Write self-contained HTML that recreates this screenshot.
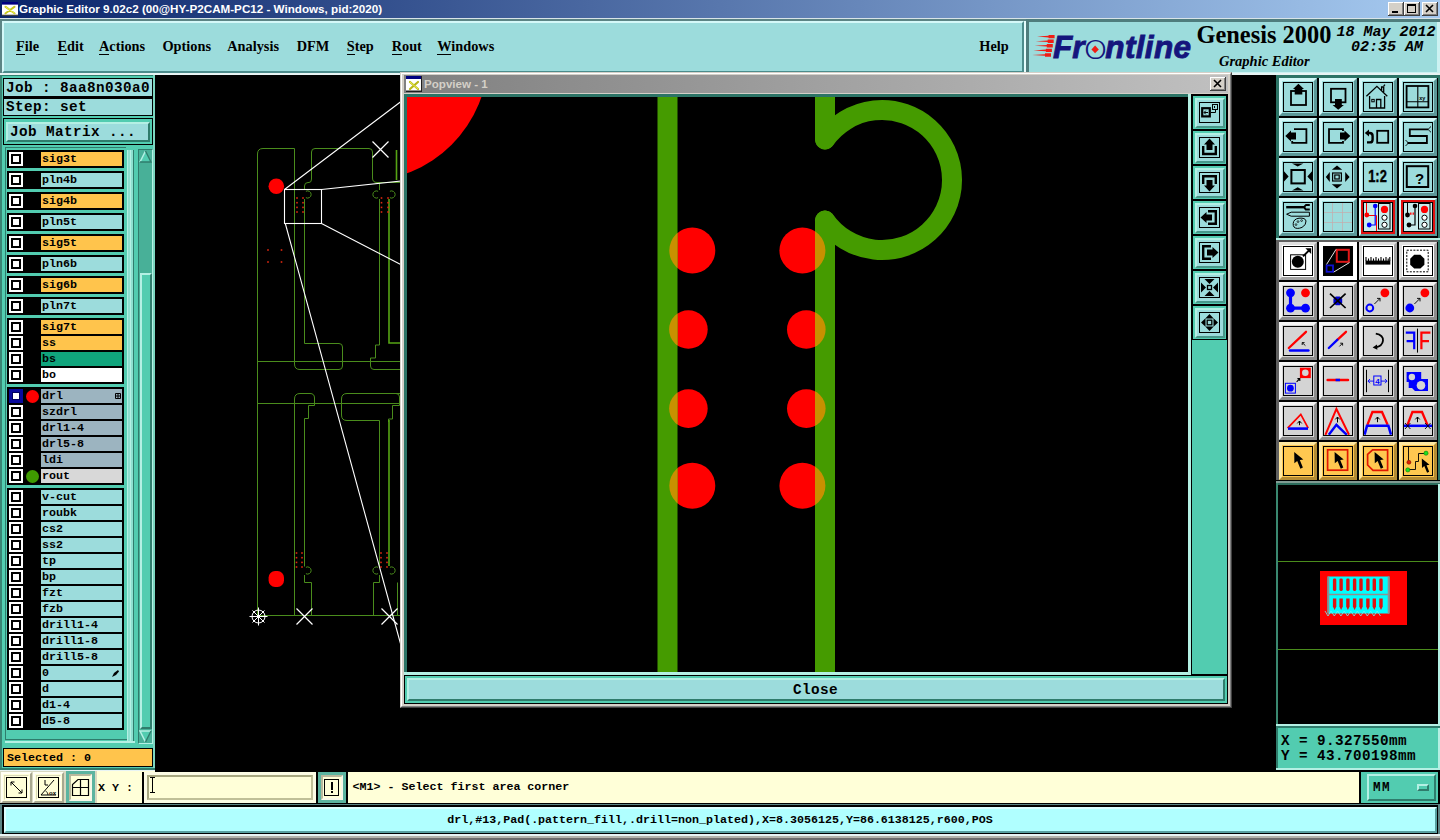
<!DOCTYPE html>
<html lang="en"><head><meta charset="utf-8"><title>Graphic Editor</title>
<style>
html,body{margin:0;padding:0}
body{width:1440px;height:840px;position:relative;overflow:hidden;background:#000;font-family:"Liberation Mono",monospace}
div,span,svg{position:absolute;display:block}
span{white-space:pre}
u{text-decoration:none;border-bottom:1px solid #000;padding-bottom:0}
</style></head>
<body>
<!-- part_frame -->
<div style="left:0px;top:0px;width:1440px;height:840px;background:#5c8484"></div>
<div style="left:0px;top:0px;width:1440px;height:18px;background:linear-gradient(90deg,#0a246a 0%,#a6caf0 100%)"></div>
<div style="left:0px;top:18px;width:1440px;height:1px;background:#d8e4e8"></div>
<svg style="left:2px;top:2px" width="16" height="14" viewBox="0 0 16 16" preserveAspectRatio="none"><rect x="0" y="0" width="16" height="16" fill="#fff"/><rect x="0" y="0" width="16" height="3" fill="#000080"/><rect x="0" y="14.5" width="16" height="1.5" fill="#404040"/><path d="M3.5 5.5L12.5 13M12.5 5.5L3.5 13" stroke="#c8c81e" stroke-width="2.2" stroke-linecap="round"/><path d="M3.5 5.5L12.5 13" stroke="#f0f050" stroke-width="1"/></svg>
<span class="ttl" style="left:19px;top:1px;font:bold 11.65px/16px 'Liberation Sans', sans-serif;color:#fff">Graphic Editor 9.02c2 (00@HY-P2CAM-PC12 - Windows, pid:2020)</span>
<svg style="left:1388px;top:2px" width="16" height="14" viewBox="0 0 16 14"><rect width="16" height="14" fill="#404040"/><rect width="15" height="13" fill="#fff"/><rect x="1" y="1" width="14" height="12" fill="#808080"/><rect x="1" y="1" width="13" height="11" fill="#d4d0c8"/><rect x="4" y="9" width="6" height="2" fill="#000"/></svg>
<svg style="left:1404px;top:2px" width="16" height="14" viewBox="0 0 16 14"><rect width="16" height="14" fill="#404040"/><rect width="15" height="13" fill="#fff"/><rect x="1" y="1" width="14" height="12" fill="#808080"/><rect x="1" y="1" width="13" height="11" fill="#d4d0c8"/><rect x="3.5" y="2.5" width="8" height="8" fill="none" stroke="#000"/><rect x="3" y="2" width="9" height="2" fill="#000"/></svg>
<svg style="left:1422px;top:2px" width="16" height="14" viewBox="0 0 16 14"><rect width="16" height="14" fill="#404040"/><rect width="15" height="13" fill="#fff"/><rect x="1" y="1" width="14" height="12" fill="#808080"/><rect x="1" y="1" width="13" height="11" fill="#d4d0c8"/><path d="M4 3L11 10M11 3L4 10" stroke="#000" stroke-width="1.6"/></svg>
<div style="left:2px;top:21px;width:1022px;height:52px;background:#9cdcdc;box-sizing:border-box;border:2px solid;border-color:#d4f8f8 #4c8c8c #4c8c8c #d4f8f8"></div>
<span class="mi" style="left:16px;top:37px;font:bold 14.3px/18px 'Liberation Serif', serif;color:#000"><u>F</u>ile</span>
<span class="mi" style="left:57.5px;top:37px;font:bold 14.3px/18px 'Liberation Serif', serif;color:#000"><u>E</u>dit</span>
<span class="mi" style="left:99px;top:37px;font:bold 14.3px/18px 'Liberation Serif', serif;color:#000"><u>A</u>ctions</span>
<span class="mi" style="left:162.5px;top:37px;font:bold 14.3px/18px 'Liberation Serif', serif;color:#000">Options</span>
<span class="mi" style="left:227.3px;top:37px;font:bold 14.3px/18px 'Liberation Serif', serif;color:#000">Analysis</span>
<span class="mi" style="left:296.7px;top:37px;font:bold 14.3px/18px 'Liberation Serif', serif;color:#000">DFM</span>
<span class="mi" style="left:346.7px;top:37px;font:bold 14.3px/18px 'Liberation Serif', serif;color:#000"><u>S</u>tep</span>
<span class="mi" style="left:391.7px;top:37px;font:bold 14.3px/18px 'Liberation Serif', serif;color:#000"><u>R</u>out</span>
<span class="mi" style="left:437.3px;top:37px;font:bold 14.3px/18px 'Liberation Serif', serif;color:#000"><u>W</u>indows</span>
<span class="mi" style="left:979.3px;top:37px;font:bold 14.3px/18px 'Liberation Serif', serif;color:#000">Help</span>
<div style="left:1024px;top:21px;width:2px;height:51px;background:#e4fcfc"></div>
<div style="left:1026px;top:19px;width:414px;height:53px;background:#4f7d7d"></div>
<div style="left:1029px;top:22px;width:411px;height:50px;background:#9cdcdc"></div>
<div style="left:1024px;top:72px;width:416px;height:3px;background:#ccf2f2"></div>
<div style="left:1437px;top:22px;width:3px;height:50px;background:#ccf2f2"></div>
<svg style="left:1030px;top:24px" width="165" height="44" viewBox="1030 24 165 44"><path d="M1037.0 36.6L1048.6 35.8V34.9H1054.6V38.3H1048.6V37.4z" fill="#f01c14"/><path d="M1035.8 41.2L1047.7 40.4V39.5H1053.7V42.9H1047.7V42.0z" fill="#f01c14"/><path d="M1034.6 45.8L1046.8 45.0V44.1H1052.8V47.5H1046.8V46.6z" fill="#f01c14"/><path d="M1033.4 50.4L1045.9 49.6V48.7H1051.9V52.1H1045.9V51.2z" fill="#f01c14"/><path d="M1032.2 55.0L1045.0 54.2V53.3H1051.0V56.7H1045.0V55.8z" fill="#f01c14"/><path d="M1095.1 45.6l3.7 3.8l-3.7 3.8l-3.7 -3.8z" fill="#f01c14"/></svg>
<span style="left:1053px;top:28px;font:italic bold 31.5px/36px 'Liberation Sans', sans-serif;color:#15157d;-webkit-text-stroke:0.9px #15157d">Fr<span style="position:relative;display:inline-block;top:0.6px;width:20.8px;text-align:center;font:normal 200 34px/36px 'DejaVu Sans', sans-serif;-webkit-text-stroke:0;transform:scaleX(1.25)">o</span><span style="position:static;display:inline;letter-spacing:0.35px">ntline</span></span>
<span style="left:1196.5px;top:21px;font:bold 24.4px/28px 'Liberation Serif', serif;color:#000">Genesis 2000</span>
<span style="left:1219px;top:53px;font:italic bold 14.5px/16px 'Liberation Serif', serif;color:#000">Graphic Editor</span>
<span style="left:1336.5px;top:24px;font:italic bold 15px/17px 'Liberation Mono', monospace;color:#000">18 May 2012</span>
<span style="left:1351px;top:39px;font:italic bold 15px/17px 'Liberation Mono', monospace;color:#000">02:35 AM</span>
<!-- part_left -->
<div style="left:0px;top:75px;width:155px;height:695px;background:#52ccb0"></div>
<div style="left:0px;top:75px;width:2px;height:695px;background:#3a8474"></div>
<div style="left:153px;top:75px;width:2px;height:695px;background:#7cd6c0"></div>
<div style="left:2px;top:75px;width:151px;height:1px;background:#2f7c6c"></div>
<div style="left:3px;top:78px;width:150px;height:19px;background:#9cdcdc;box-sizing:border-box;border:1px solid #000"></div>
<div style="left:3px;top:97px;width:150px;height:19px;background:#9cdcdc;box-sizing:border-box;border:1px solid #000;border-top:2px solid #000"></div>
<span style="left:6px;top:80px;font:bold 14.3px/17px 'Liberation Mono', monospace;letter-spacing:0.42px;color:#000">Job : 8aa8n030a0</span>
<span style="left:6px;top:99px;font:bold 14.3px/17px 'Liberation Mono', monospace;letter-spacing:0.42px;color:#000">Step: set</span>
<div style="left:3px;top:118px;width:150px;height:27px;background:#52ccb0;box-sizing:border-box;border:1px solid #000"></div>
<div style="left:6px;top:122px;width:144px;height:20px;background:#9cdcdc;box-sizing:border-box;border:2px solid;border-color:#b4f0e4 #2f7c6c #2f7c6c #b4f0e4"></div>
<span style="left:10px;top:124px;font:bold 14.3px/17px 'Liberation Mono', monospace;letter-spacing:0.42px;color:#000">Job Matrix ...</span>
<div style="left:7px;top:150px;width:117px;height:18px;background:#000"></div>
<div style="left:9px;top:152px;width:14px;height:14px;background:#fff"><div style="left:2px;top:2px;width:10px;height:10px;background:#fff;box-sizing:border-box;border:2px solid #000"></div>
</div>
<div style="left:41px;top:152px;width:81px;height:14px;background:#ffc44c"></div>
<span style="left:42px;top:152px;font:bold 11.67px/14px 'Liberation Mono', monospace;color:#000">sig3t</span>
<div style="left:7px;top:171px;width:117px;height:18px;background:#000"></div>
<div style="left:9px;top:173px;width:14px;height:14px;background:#fff"><div style="left:2px;top:2px;width:10px;height:10px;background:#fff;box-sizing:border-box;border:2px solid #000"></div>
</div>
<div style="left:41px;top:173px;width:81px;height:14px;background:#9cdcdc"></div>
<span style="left:42px;top:173px;font:bold 11.67px/14px 'Liberation Mono', monospace;color:#000">pln4b</span>
<div style="left:7px;top:192px;width:117px;height:18px;background:#000"></div>
<div style="left:9px;top:194px;width:14px;height:14px;background:#fff"><div style="left:2px;top:2px;width:10px;height:10px;background:#fff;box-sizing:border-box;border:2px solid #000"></div>
</div>
<div style="left:41px;top:194px;width:81px;height:14px;background:#ffc44c"></div>
<span style="left:42px;top:194px;font:bold 11.67px/14px 'Liberation Mono', monospace;color:#000">sig4b</span>
<div style="left:7px;top:213px;width:117px;height:18px;background:#000"></div>
<div style="left:9px;top:215px;width:14px;height:14px;background:#fff"><div style="left:2px;top:2px;width:10px;height:10px;background:#fff;box-sizing:border-box;border:2px solid #000"></div>
</div>
<div style="left:41px;top:215px;width:81px;height:14px;background:#9cdcdc"></div>
<span style="left:42px;top:215px;font:bold 11.67px/14px 'Liberation Mono', monospace;color:#000">pln5t</span>
<div style="left:7px;top:234px;width:117px;height:18px;background:#000"></div>
<div style="left:9px;top:236px;width:14px;height:14px;background:#fff"><div style="left:2px;top:2px;width:10px;height:10px;background:#fff;box-sizing:border-box;border:2px solid #000"></div>
</div>
<div style="left:41px;top:236px;width:81px;height:14px;background:#ffc44c"></div>
<span style="left:42px;top:236px;font:bold 11.67px/14px 'Liberation Mono', monospace;color:#000">sig5t</span>
<div style="left:7px;top:255px;width:117px;height:18px;background:#000"></div>
<div style="left:9px;top:257px;width:14px;height:14px;background:#fff"><div style="left:2px;top:2px;width:10px;height:10px;background:#fff;box-sizing:border-box;border:2px solid #000"></div>
</div>
<div style="left:41px;top:257px;width:81px;height:14px;background:#9cdcdc"></div>
<span style="left:42px;top:257px;font:bold 11.67px/14px 'Liberation Mono', monospace;color:#000">pln6b</span>
<div style="left:7px;top:276px;width:117px;height:18px;background:#000"></div>
<div style="left:9px;top:278px;width:14px;height:14px;background:#fff"><div style="left:2px;top:2px;width:10px;height:10px;background:#fff;box-sizing:border-box;border:2px solid #000"></div>
</div>
<div style="left:41px;top:278px;width:81px;height:14px;background:#ffc44c"></div>
<span style="left:42px;top:278px;font:bold 11.67px/14px 'Liberation Mono', monospace;color:#000">sig6b</span>
<div style="left:7px;top:297px;width:117px;height:18px;background:#000"></div>
<div style="left:9px;top:299px;width:14px;height:14px;background:#fff"><div style="left:2px;top:2px;width:10px;height:10px;background:#fff;box-sizing:border-box;border:2px solid #000"></div>
</div>
<div style="left:41px;top:299px;width:81px;height:14px;background:#9cdcdc"></div>
<span style="left:42px;top:299px;font:bold 11.67px/14px 'Liberation Mono', monospace;color:#000">pln7t</span>
<div style="left:7px;top:318px;width:117px;height:66px;background:#000"></div>
<div style="left:9px;top:320px;width:14px;height:14px;background:#fff"><div style="left:2px;top:2px;width:10px;height:10px;background:#fff;box-sizing:border-box;border:2px solid #000"></div>
</div>
<div style="left:41px;top:320px;width:81px;height:14px;background:#ffc44c"></div>
<span style="left:42px;top:320px;font:bold 11.67px/14px 'Liberation Mono', monospace;color:#000">sig7t</span>
<div style="left:9px;top:336px;width:14px;height:14px;background:#fff"><div style="left:2px;top:2px;width:10px;height:10px;background:#fff;box-sizing:border-box;border:2px solid #000"></div>
</div>
<div style="left:41px;top:336px;width:81px;height:14px;background:#ffc44c"></div>
<span style="left:42px;top:336px;font:bold 11.67px/14px 'Liberation Mono', monospace;color:#000">ss</span>
<div style="left:9px;top:352px;width:14px;height:14px;background:#fff"><div style="left:2px;top:2px;width:10px;height:10px;background:#fff;box-sizing:border-box;border:2px solid #000"></div>
</div>
<div style="left:41px;top:352px;width:81px;height:14px;background:#10a47c"></div>
<span style="left:42px;top:352px;font:bold 11.67px/14px 'Liberation Mono', monospace;color:#000">bs</span>
<div style="left:9px;top:368px;width:14px;height:14px;background:#fff"><div style="left:2px;top:2px;width:10px;height:10px;background:#fff;box-sizing:border-box;border:2px solid #000"></div>
</div>
<div style="left:41px;top:368px;width:81px;height:14px;background:#ffffff"></div>
<span style="left:42px;top:368px;font:bold 11.67px/14px 'Liberation Mono', monospace;color:#000">bo</span>
<div style="left:7px;top:387px;width:117px;height:98px;background:#000"></div>
<div style="left:9px;top:389px;width:14px;height:14px;background:#0a0a9c"><div style="left:3px;top:3px;width:8px;height:8px;background:#fff;box-sizing:border-box;border:1px solid #000060"></div>
</div>
<div style="left:41px;top:389px;width:81px;height:14px;background:#9cb4c0"></div>
<span style="left:42px;top:389px;font:bold 11.67px/14px 'Liberation Mono', monospace;color:#000">drl</span>
<div style="left:26px;top:390px;width:13px;height:13px;background:#ff0000;border-radius:50%"></div>
<svg style="left:115px;top:393px" width="6" height="6" viewBox="0 0 6 6"><path d="M0.5 0.5h5v5h-5zM3 0.5v5M0.5 3h5" fill="none" stroke="#000" stroke-width="1"/></svg>
<div style="left:9px;top:405px;width:14px;height:14px;background:#fff"><div style="left:2px;top:2px;width:10px;height:10px;background:#fff;box-sizing:border-box;border:2px solid #000"></div>
</div>
<div style="left:41px;top:405px;width:81px;height:14px;background:#9cb4c0"></div>
<span style="left:42px;top:405px;font:bold 11.67px/14px 'Liberation Mono', monospace;color:#000">szdrl</span>
<div style="left:9px;top:421px;width:14px;height:14px;background:#fff"><div style="left:2px;top:2px;width:10px;height:10px;background:#fff;box-sizing:border-box;border:2px solid #000"></div>
</div>
<div style="left:41px;top:421px;width:81px;height:14px;background:#9cb4c0"></div>
<span style="left:42px;top:421px;font:bold 11.67px/14px 'Liberation Mono', monospace;color:#000">drl1-4</span>
<div style="left:9px;top:437px;width:14px;height:14px;background:#fff"><div style="left:2px;top:2px;width:10px;height:10px;background:#fff;box-sizing:border-box;border:2px solid #000"></div>
</div>
<div style="left:41px;top:437px;width:81px;height:14px;background:#9cb4c0"></div>
<span style="left:42px;top:437px;font:bold 11.67px/14px 'Liberation Mono', monospace;color:#000">drl5-8</span>
<div style="left:9px;top:453px;width:14px;height:14px;background:#fff"><div style="left:2px;top:2px;width:10px;height:10px;background:#fff;box-sizing:border-box;border:2px solid #000"></div>
</div>
<div style="left:41px;top:453px;width:81px;height:14px;background:#9cb4c0"></div>
<span style="left:42px;top:453px;font:bold 11.67px/14px 'Liberation Mono', monospace;color:#000">ldi</span>
<div style="left:9px;top:469px;width:14px;height:14px;background:#fff"><div style="left:2px;top:2px;width:10px;height:10px;background:#fff;box-sizing:border-box;border:2px solid #000"></div>
</div>
<div style="left:41px;top:469px;width:81px;height:14px;background:#d8d8d8"></div>
<span style="left:42px;top:469px;font:bold 11.67px/14px 'Liberation Mono', monospace;color:#000">rout</span>
<div style="left:26px;top:470px;width:13px;height:13px;background:#3f9a00;border-radius:50%"></div>
<div style="left:7px;top:488px;width:117px;height:242px;background:#000"></div>
<div style="left:9px;top:490px;width:14px;height:14px;background:#fff"><div style="left:2px;top:2px;width:10px;height:10px;background:#fff;box-sizing:border-box;border:2px solid #000"></div>
</div>
<div style="left:41px;top:490px;width:81px;height:14px;background:#9cdcdc"></div>
<span style="left:42px;top:490px;font:bold 11.67px/14px 'Liberation Mono', monospace;color:#000">v-cut</span>
<div style="left:9px;top:506px;width:14px;height:14px;background:#fff"><div style="left:2px;top:2px;width:10px;height:10px;background:#fff;box-sizing:border-box;border:2px solid #000"></div>
</div>
<div style="left:41px;top:506px;width:81px;height:14px;background:#9cdcdc"></div>
<span style="left:42px;top:506px;font:bold 11.67px/14px 'Liberation Mono', monospace;color:#000">roubk</span>
<div style="left:9px;top:522px;width:14px;height:14px;background:#fff"><div style="left:2px;top:2px;width:10px;height:10px;background:#fff;box-sizing:border-box;border:2px solid #000"></div>
</div>
<div style="left:41px;top:522px;width:81px;height:14px;background:#9cdcdc"></div>
<span style="left:42px;top:522px;font:bold 11.67px/14px 'Liberation Mono', monospace;color:#000">cs2</span>
<div style="left:9px;top:538px;width:14px;height:14px;background:#fff"><div style="left:2px;top:2px;width:10px;height:10px;background:#fff;box-sizing:border-box;border:2px solid #000"></div>
</div>
<div style="left:41px;top:538px;width:81px;height:14px;background:#9cdcdc"></div>
<span style="left:42px;top:538px;font:bold 11.67px/14px 'Liberation Mono', monospace;color:#000">ss2</span>
<div style="left:9px;top:554px;width:14px;height:14px;background:#fff"><div style="left:2px;top:2px;width:10px;height:10px;background:#fff;box-sizing:border-box;border:2px solid #000"></div>
</div>
<div style="left:41px;top:554px;width:81px;height:14px;background:#9cdcdc"></div>
<span style="left:42px;top:554px;font:bold 11.67px/14px 'Liberation Mono', monospace;color:#000">tp</span>
<div style="left:9px;top:570px;width:14px;height:14px;background:#fff"><div style="left:2px;top:2px;width:10px;height:10px;background:#fff;box-sizing:border-box;border:2px solid #000"></div>
</div>
<div style="left:41px;top:570px;width:81px;height:14px;background:#9cdcdc"></div>
<span style="left:42px;top:570px;font:bold 11.67px/14px 'Liberation Mono', monospace;color:#000">bp</span>
<div style="left:9px;top:586px;width:14px;height:14px;background:#fff"><div style="left:2px;top:2px;width:10px;height:10px;background:#fff;box-sizing:border-box;border:2px solid #000"></div>
</div>
<div style="left:41px;top:586px;width:81px;height:14px;background:#9cdcdc"></div>
<span style="left:42px;top:586px;font:bold 11.67px/14px 'Liberation Mono', monospace;color:#000">fzt</span>
<div style="left:9px;top:602px;width:14px;height:14px;background:#fff"><div style="left:2px;top:2px;width:10px;height:10px;background:#fff;box-sizing:border-box;border:2px solid #000"></div>
</div>
<div style="left:41px;top:602px;width:81px;height:14px;background:#9cdcdc"></div>
<span style="left:42px;top:602px;font:bold 11.67px/14px 'Liberation Mono', monospace;color:#000">fzb</span>
<div style="left:9px;top:618px;width:14px;height:14px;background:#fff"><div style="left:2px;top:2px;width:10px;height:10px;background:#fff;box-sizing:border-box;border:2px solid #000"></div>
</div>
<div style="left:41px;top:618px;width:81px;height:14px;background:#9cdcdc"></div>
<span style="left:42px;top:618px;font:bold 11.67px/14px 'Liberation Mono', monospace;color:#000">drill1-4</span>
<div style="left:9px;top:634px;width:14px;height:14px;background:#fff"><div style="left:2px;top:2px;width:10px;height:10px;background:#fff;box-sizing:border-box;border:2px solid #000"></div>
</div>
<div style="left:41px;top:634px;width:81px;height:14px;background:#9cdcdc"></div>
<span style="left:42px;top:634px;font:bold 11.67px/14px 'Liberation Mono', monospace;color:#000">drill1-8</span>
<div style="left:9px;top:650px;width:14px;height:14px;background:#fff"><div style="left:2px;top:2px;width:10px;height:10px;background:#fff;box-sizing:border-box;border:2px solid #000"></div>
</div>
<div style="left:41px;top:650px;width:81px;height:14px;background:#9cdcdc"></div>
<span style="left:42px;top:650px;font:bold 11.67px/14px 'Liberation Mono', monospace;color:#000">drill5-8</span>
<div style="left:9px;top:666px;width:14px;height:14px;background:#fff"><div style="left:2px;top:2px;width:10px;height:10px;background:#fff;box-sizing:border-box;border:2px solid #000"></div>
</div>
<div style="left:41px;top:666px;width:81px;height:14px;background:#9cdcdc"></div>
<span style="left:42px;top:666px;font:bold 11.67px/14px 'Liberation Mono', monospace;color:#000">0</span>
<svg style="left:111px;top:669px" width="9" height="9" viewBox="0 0 9 9"><path d="M1 8L3 4L7 1L8 2.5L5 6z" fill="#000"/></svg>
<div style="left:9px;top:682px;width:14px;height:14px;background:#fff"><div style="left:2px;top:2px;width:10px;height:10px;background:#fff;box-sizing:border-box;border:2px solid #000"></div>
</div>
<div style="left:41px;top:682px;width:81px;height:14px;background:#9cdcdc"></div>
<span style="left:42px;top:682px;font:bold 11.67px/14px 'Liberation Mono', monospace;color:#000">d</span>
<div style="left:9px;top:698px;width:14px;height:14px;background:#fff"><div style="left:2px;top:2px;width:10px;height:10px;background:#fff;box-sizing:border-box;border:2px solid #000"></div>
</div>
<div style="left:41px;top:698px;width:81px;height:14px;background:#9cdcdc"></div>
<span style="left:42px;top:698px;font:bold 11.67px/14px 'Liberation Mono', monospace;color:#000">d1-4</span>
<div style="left:9px;top:714px;width:14px;height:14px;background:#fff"><div style="left:2px;top:2px;width:10px;height:10px;background:#fff;box-sizing:border-box;border:2px solid #000"></div>
</div>
<div style="left:41px;top:714px;width:81px;height:14px;background:#9cdcdc"></div>
<span style="left:42px;top:714px;font:bold 11.67px/14px 'Liberation Mono', monospace;color:#000">d5-8</span>
<div style="left:127px;top:150px;width:7px;height:591px;background:linear-gradient(90deg,#b4f0e4 0 1px,#8ee0d0 1px 3px,#b4f0e4 3px 4px,#8ee0d0 4px 6px,#2f7c6c 6px 7px)"></div>
<div style="left:5px;top:147px;width:121px;height:1px;background:#2f7c6c"></div>
<div style="left:5px;top:147px;width:1px;height:593px;background:#2f7c6c"></div>
<div style="left:5px;top:739px;width:122px;height:1px;background:#2f7c6c"></div>
<div style="left:5px;top:741px;width:130px;height:2px;background:#b4f0e4"></div>
<div style="left:138px;top:149px;width:15px;height:595px;background:#48b098;box-sizing:border-box;border:1px solid;border-color:#2f7c6c #b4f0e4 #b4f0e4 #2f7c6c"></div>
<svg style="left:139px;top:150px" width="13" height="14" viewBox="0 0 13 14"><path d="M6.5 1L12 12H1z" fill="#52ccb0"/><path d="M6.5 1L1 12" stroke="#b4f0e4" stroke-width="1.6" fill="none"/><path d="M6.5 1L12 12H1" stroke="#2f7c6c" stroke-width="1.4" fill="none"/></svg>
<svg style="left:139px;top:729px" width="13" height="14" viewBox="0 0 13 14"><path d="M6.5 13L12 2H1z" fill="#52ccb0"/><path d="M12 2H1L6.5 13" stroke="#b4f0e4" stroke-width="1.6" fill="none"/><path d="M6.5 13L12 2" stroke="#2f7c6c" stroke-width="1.4" fill="none"/></svg>
<div style="left:140px;top:273px;width:12px;height:456px;background:#52ccb0;box-sizing:border-box;border:2px solid;border-color:#b4f0e4 #2f7c6c #2f7c6c #b4f0e4"></div>
<div style="left:3px;top:748px;width:150px;height:19px;background:#ffc44c;box-sizing:border-box;border:1px solid #000"></div>
<span style="left:7px;top:751px;font:bold 11.67px/14px 'Liberation Mono', monospace;color:#000">Selected : 0</span>
<div style="left:0px;top:768px;width:155px;height:2px;background:#2f7c6c"></div>
<!-- part_canvas -->
<div style="left:0px;top:73px;width:1440px;height:2px;background:#e8f4f4"></div>
<div style="left:155px;top:75px;width:1285px;height:697px;background:#000"></div>
<svg style="left:155px;top:75px" width="1122" height="695" viewBox="155 75 1122 695"><g fill="none" stroke="#4a8c1c" stroke-width="1"><path d="M257.5 615.5V154Q257.5 148.5 263 148.5H294.5V364Q294.5 369.5 300 369.5H339Q342.5 369.5 342.5 366V347Q342.5 343.5 339 343.5H304.5V199"/><path d="M257.5 361.5H400M257.5 403.5H400M257.5 615.5H400"/><path d="M304.5 190V186Q304.5 182.5 308 182.5H309Q311.5 182.5 311.5 179V152Q311.5 148.5 315 148.5H369Q372.5 148.5 372.5 152V178Q372.5 182.5 377 182.5H400"/><path d="M379.5 199V345H375.5V358H370.5V366Q370.5 369.5 374 369.5H400"/><path d="M379.5 182.5V190"/><path d="M294.5 615.5V399Q294.5 393.5 300 393.5H310Q314.5 393.5 314.5 398V405.5H308.5V418.5H304.5V566.5"/><path d="M304.5 575V582.5H311.5V615.5"/><path d="M400 393.5H347Q341.5 393.5 341.5 399V415Q341.5 420.5 347 420.5H379.5V566.5"/><path d="M379.5 575V582.5H373.5V615.5"/><path d="M397.5 582.5V615.5M396 393.5Q399.5 393.5 399.5 397V405.5H392.5V419H388.5V422"/><path d="M305.9 191.3A3.6 3.6 0 1 1 305.9 197.7" /><path d="M378.1 191.3A3.6 3.6 0 1 0 378.1 197.7" /><path d="M389.9 191.3A3.6 3.6 0 1 1 389.9 197.7" /><path d="M305.9 567.3A3.6 3.6 0 1 1 305.9 573.7" /><path d="M378.1 567.3A3.6 3.6 0 1 0 378.1 573.7" /><path d="M389.9 567.3A3.6 3.6 0 1 1 389.9 573.7" /></g><g fill="none" stroke="#56a414" stroke-width="1.6"><path d="M396.5 150V180M389 199V343H400M389 420V566"/></g><rect x="296.2" y="197.2" width="1.6" height="1.6" fill="#e02810"/><rect x="296.2" y="201.9" width="1.6" height="1.6" fill="#e02810"/><rect x="296.2" y="206.6" width="1.6" height="1.6" fill="#e02810"/><rect x="296.2" y="211.2" width="1.6" height="1.6" fill="#e02810"/><rect x="302.2" y="197.2" width="1.6" height="1.6" fill="#e02810"/><rect x="302.2" y="201.9" width="1.6" height="1.6" fill="#e02810"/><rect x="302.2" y="206.6" width="1.6" height="1.6" fill="#e02810"/><rect x="302.2" y="211.2" width="1.6" height="1.6" fill="#e02810"/><rect x="380.7" y="197.2" width="1.6" height="1.6" fill="#e02810"/><rect x="380.7" y="201.9" width="1.6" height="1.6" fill="#e02810"/><rect x="380.7" y="206.6" width="1.6" height="1.6" fill="#e02810"/><rect x="380.7" y="211.2" width="1.6" height="1.6" fill="#e02810"/><rect x="387.2" y="197.2" width="1.6" height="1.6" fill="#e02810"/><rect x="387.2" y="201.9" width="1.6" height="1.6" fill="#e02810"/><rect x="387.2" y="206.6" width="1.6" height="1.6" fill="#e02810"/><rect x="387.2" y="211.2" width="1.6" height="1.6" fill="#e02810"/><rect x="267.2" y="249.2" width="1.6" height="1.6" fill="#e02810"/><rect x="267.2" y="261.2" width="1.6" height="1.6" fill="#e02810"/><rect x="280.7" y="249.2" width="1.6" height="1.6" fill="#e02810"/><rect x="280.7" y="261.2" width="1.6" height="1.6" fill="#e02810"/><rect x="295.7" y="552.2" width="1.6" height="1.6" fill="#e02810"/><rect x="295.7" y="556.9" width="1.6" height="1.6" fill="#e02810"/><rect x="295.7" y="561.6" width="1.6" height="1.6" fill="#e02810"/><rect x="295.7" y="566.2" width="1.6" height="1.6" fill="#e02810"/><rect x="301.2" y="552.2" width="1.6" height="1.6" fill="#e02810"/><rect x="301.2" y="556.9" width="1.6" height="1.6" fill="#e02810"/><rect x="301.2" y="561.6" width="1.6" height="1.6" fill="#e02810"/><rect x="301.2" y="566.2" width="1.6" height="1.6" fill="#e02810"/><rect x="380.2" y="552.2" width="1.6" height="1.6" fill="#e02810"/><rect x="380.2" y="556.9" width="1.6" height="1.6" fill="#e02810"/><rect x="380.2" y="561.6" width="1.6" height="1.6" fill="#e02810"/><rect x="380.2" y="566.2" width="1.6" height="1.6" fill="#e02810"/><rect x="386.2" y="552.2" width="1.6" height="1.6" fill="#e02810"/><rect x="386.2" y="556.9" width="1.6" height="1.6" fill="#e02810"/><rect x="386.2" y="561.6" width="1.6" height="1.6" fill="#e02810"/><rect x="386.2" y="566.2" width="1.6" height="1.6" fill="#e02810"/><circle cx="276.3" cy="186.2" r="7.8" fill="#ff0000"/><rect x="268.6" y="571" width="15.4" height="16" rx="6.5" fill="#ff0000"/><g fill="none" stroke="#fff" stroke-width="1.1"><rect x="284.5" y="189.5" width="37" height="34"/><path d="M284.5 189.5L407 97M321.5 189.5L1188 97M321.5 223.5L1188 672M285.3 223.5L408.3 672"/></g><path d="M372.5 141.5L388.5 157.5M388.5 141.5L372.5 157.5" stroke="#fff" stroke-width="1.2" fill="none"/><path d="M296.5 608.5L312.5 624.5M312.5 608.5L296.5 624.5" stroke="#fff" stroke-width="1.2" fill="none"/><path d="M381.5 608.5L397.5 624.5M397.5 608.5L381.5 624.5" stroke="#fff" stroke-width="1.2" fill="none"/><g fill="none" stroke="#fff" stroke-width="1"><circle cx="258.5" cy="616.5" r="6.5"/><path d="M249.5 616.5H267.5M258.5 607.5V625.5M252.5 610.5L264.5 622.5M264.5 610.5L252.5 622.5"/></g></svg>
<!-- part_popview -->
<div style="left:400px;top:72px;width:832px;height:636px;background:#d4d0c8;box-sizing:border-box;border:1px solid;border-color:#d4d0c8 #404040 #404040 #d4d0c8"></div>
<div style="left:401px;top:73px;width:830px;height:634px;box-sizing:border-box;border:1px solid;border-color:#fff #808080 #808080 #fff"></div>
<div style="left:404px;top:75px;width:824px;height:18px;background:linear-gradient(90deg,#808080,#c0c0c0)"></div>
<svg style="left:406px;top:76px" width="16" height="16" viewBox="0 0 16 16"><rect x="0" y="0" width="16" height="16" fill="#fff"/><rect x="0" y="0" width="16" height="3" fill="#000080"/><rect x="0" y="14.5" width="16" height="1.5" fill="#202020"/><rect x="15" y="0" width="1" height="16" fill="#202020"/><path d="M4 6L12 13M12 6L4 13" stroke="#b8b818" stroke-width="2.2" stroke-linecap="round"/><path d="M4 6L12 13" stroke="#f0f050" stroke-width="1"/></svg>
<span style="left:424px;top:76px;font:bold 11.6px/16px 'Liberation Sans', sans-serif;color:#d4d0c8">Popview - 1</span>
<svg style="left:1210px;top:77px" width="16" height="14" viewBox="0 0 16 14"><rect width="16" height="14" fill="#404040"/><rect width="15" height="13" fill="#fff"/><rect x="1" y="1" width="14" height="12" fill="#808080"/><rect x="1" y="1" width="13" height="11" fill="#d4d0c8"/><path d="M4 3L11 10M11 3L4 10" stroke="#000" stroke-width="1.6"/></svg>
<div style="left:404px;top:94px;width:824px;height:610px;background:#000"></div>
<div style="left:404px;top:94px;width:787px;height:581px;background:#b4f0e4"></div>
<div style="left:404px;top:94px;width:784px;height:3px;background:#2c7466"></div>
<div style="left:404px;top:94px;width:3px;height:578px;background:#2c7466"></div>
<div style="left:407px;top:97px;width:781px;height:575px;background:#000"></div>
<svg style="left:407px;top:97px" width="781" height="575" viewBox="407 97 781 575"><circle cx="363.4" cy="56.4" r="124.8" fill="#ff0000"/><circle cx="692.3" cy="250.5" r="23" fill="#ff0000"/><circle cx="802.4" cy="250.5" r="23" fill="#ff0000"/><circle cx="688.4" cy="329.5" r="19.3" fill="#ff0000"/><circle cx="806.3" cy="329.5" r="19.3" fill="#ff0000"/><circle cx="688.4" cy="408.6" r="19.3" fill="#ff0000"/><circle cx="806.3" cy="408.6" r="19.3" fill="#ff0000"/><circle cx="692.3" cy="485.8" r="23" fill="#ff0000"/><circle cx="802.4" cy="485.8" r="23" fill="#ff0000"/><g fill="none" stroke="#459b00" stroke-width="20" stroke-linecap="round"><path d="M667.5 80V690"/><path d="M825 80V139.4"/><path d="M825 139.4A70 70 0 1 1 825 220.6"/><path d="M825 220.6V690"/></g><clipPath id="cl"><rect x="657.5" y="97" width="20" height="575"/><rect x="815" y="97" width="20" height="575"/></clipPath><g clip-path="url(#cl)"><circle cx="692.3" cy="250.5" r="23" fill="#c89000"/><circle cx="802.4" cy="250.5" r="23" fill="#c89000"/><circle cx="688.4" cy="329.5" r="19.3" fill="#c89000"/><circle cx="806.3" cy="329.5" r="19.3" fill="#c89000"/><circle cx="688.4" cy="408.6" r="19.3" fill="#c89000"/><circle cx="806.3" cy="408.6" r="19.3" fill="#c89000"/><circle cx="692.3" cy="485.8" r="23" fill="#c89000"/><circle cx="802.4" cy="485.8" r="23" fill="#c89000"/></g></svg>
<div style="left:1192px;top:96px;width:35px;height:578px;background:#52ccb0"></div>
<div style="left:1192px;top:95px;width:35px;height:35px;background:#000"></div>
<div style="left:1193px;top:96px;width:33px;height:33px;background:#52ccb0"></div>
<div style="left:1194.5px;top:97.5px;width:30px;height:30px;background:#9cdcdc;box-sizing:border-box;border:2.5px solid;border-color:#b4f0e4 #48988a #48988a #b4f0e4"></div>
<div style="left:1199px;top:102px;width:21px;height:21px;box-sizing:border-box;border:1px solid #000"></div>
<svg style="left:1199px;top:102px" width="21" height="21" viewBox="0 0 21 21"><rect x="3.2" y="6.2" width="7.6" height="8.2" fill="none" stroke="#000" stroke-width="2.2"/><path d="M9 10.5H5.2M6.8 8.7L5 10.5L6.8 12.3" stroke="#000" stroke-width="1" fill="none"/><rect x="13.5" y="2.5" width="5" height="5" fill="none" stroke="#000"/><path d="M16.5 7.5V10.5H12" stroke="#000" fill="none"/><path d="M15.5 4V6" stroke="#000" fill="none"/></svg>
<div style="left:1192px;top:130px;width:35px;height:35px;background:#000"></div>
<div style="left:1193px;top:131px;width:33px;height:33px;background:#52ccb0"></div>
<div style="left:1194.5px;top:132.5px;width:30px;height:30px;background:#9cdcdc;box-sizing:border-box;border:2.5px solid;border-color:#b4f0e4 #48988a #48988a #b4f0e4"></div>
<div style="left:1199px;top:137px;width:21px;height:21px;box-sizing:border-box;border:1px solid #000"></div>
<svg style="left:1199px;top:137px" width="21" height="21" viewBox="0 0 21 21"><path d="M4.2 9V17H16.8V9" fill="none" stroke="#000" stroke-width="2.4"/><path d="M10.5 1.5L16 7.5H13.5V13H7.5V7.5H5z" fill="#000"/></svg>
<div style="left:1192px;top:165px;width:35px;height:35px;background:#000"></div>
<div style="left:1193px;top:166px;width:33px;height:33px;background:#52ccb0"></div>
<div style="left:1194.5px;top:167.5px;width:30px;height:30px;background:#9cdcdc;box-sizing:border-box;border:2.5px solid;border-color:#b4f0e4 #48988a #48988a #b4f0e4"></div>
<div style="left:1199px;top:172px;width:21px;height:21px;box-sizing:border-box;border:1px solid #000"></div>
<svg style="left:1199px;top:172px" width="21" height="21" viewBox="0 0 21 21"><path d="M4.2 12V4.2H16.8V12" fill="none" stroke="#000" stroke-width="2.4"/><path d="M10.5 19.5L16 13.5H13.5V8H7.5V13.5H5z" fill="#000"/></svg>
<div style="left:1192px;top:200px;width:35px;height:35px;background:#000"></div>
<div style="left:1193px;top:201px;width:33px;height:33px;background:#52ccb0"></div>
<div style="left:1194.5px;top:202.5px;width:30px;height:30px;background:#9cdcdc;box-sizing:border-box;border:2.5px solid;border-color:#b4f0e4 #48988a #48988a #b4f0e4"></div>
<div style="left:1199px;top:207px;width:21px;height:21px;box-sizing:border-box;border:1px solid #000"></div>
<svg style="left:1199px;top:207px" width="21" height="21" viewBox="0 0 21 21"><path d="M9 4.2H16.8V16.8H9" fill="none" stroke="#000" stroke-width="2.4"/><path d="M1.5 10.5L7.5 5V7.5H13V13.5H7.5V16z" fill="#000"/></svg>
<div style="left:1192px;top:235px;width:35px;height:35px;background:#000"></div>
<div style="left:1193px;top:236px;width:33px;height:33px;background:#52ccb0"></div>
<div style="left:1194.5px;top:237.5px;width:30px;height:30px;background:#9cdcdc;box-sizing:border-box;border:2.5px solid;border-color:#b4f0e4 #48988a #48988a #b4f0e4"></div>
<div style="left:1199px;top:242px;width:21px;height:21px;box-sizing:border-box;border:1px solid #000"></div>
<svg style="left:1199px;top:242px" width="21" height="21" viewBox="0 0 21 21"><path d="M12 4.2H4.2V16.8H12" fill="none" stroke="#000" stroke-width="2.4"/><path d="M19.5 10.5L13.5 5V7.5H8V13.5H13.5V16z" fill="#000"/></svg>
<div style="left:1192px;top:270px;width:35px;height:35px;background:#000"></div>
<div style="left:1193px;top:271px;width:33px;height:33px;background:#52ccb0"></div>
<div style="left:1194.5px;top:272.5px;width:30px;height:30px;background:#9cdcdc;box-sizing:border-box;border:2.5px solid;border-color:#b4f0e4 #48988a #48988a #b4f0e4"></div>
<div style="left:1199px;top:277px;width:21px;height:21px;box-sizing:border-box;border:1px solid #000"></div>
<svg style="left:1199px;top:277px" width="21" height="21" viewBox="0 0 21 21"><rect x="8.5" y="8.5" width="4" height="4" fill="none" stroke="#000" stroke-width="1.3"/><path d="M5.5 2H15.5L10.5 7zM5.5 19H15.5L10.5 14zM2 5.5V15.5L7 10.5zM19 5.5V15.5L14 10.5z" fill="#000"/></svg>
<div style="left:1192px;top:305px;width:35px;height:35px;background:#000"></div>
<div style="left:1193px;top:306px;width:33px;height:33px;background:#52ccb0"></div>
<div style="left:1194.5px;top:307.5px;width:30px;height:30px;background:#9cdcdc;box-sizing:border-box;border:2.5px solid;border-color:#b4f0e4 #48988a #48988a #b4f0e4"></div>
<div style="left:1199px;top:312px;width:21px;height:21px;box-sizing:border-box;border:1px solid #000"></div>
<svg style="left:1199px;top:312px" width="21" height="21" viewBox="0 0 21 21"><rect x="8.2" y="8.2" width="4.6" height="4.6" fill="none" stroke="#000" stroke-width="1.3"/><path d="M10.5 2l4.2 4.5h-8.4zM10.5 19l4.2 -4.5h-8.4zM2 10.5l4.5 -4.2v8.4zM19 10.5l-4.5 -4.2v8.4z" fill="#000"/></svg>
<div style="left:404px;top:675px;width:824px;height:29px;background:#000"></div>
<div style="left:405px;top:676px;width:822px;height:27px;background:#52ccb0"></div>
<div style="left:407px;top:678px;width:818px;height:23px;background:#9cdcdc;box-sizing:border-box;border:2px solid;border-color:#b4f0e4 #2f7c6c #2f7c6c #b4f0e4"></div>
<span style="left:793px;top:682px;font:bold 14.3px/17px 'Liberation Mono', monospace;letter-spacing:0.42px;color:#000">Close</span>
<!-- part_right -->
<div style="left:1276px;top:75px;width:164px;height:165px;background:#2c7466"></div>
<div style="left:1279px;top:78px;width:161px;height:160px;background:#000"></div>
<div style="left:1276px;top:240px;width:164px;height:244px;background:#606060"></div>
<div style="left:1279px;top:242px;width:161px;height:240px;background:#000"></div>
<div style="left:1438px;top:75px;width:2px;height:409px;background:#2c7466"></div>
<div style="left:1276px;top:238px;width:164px;height:2px;background:#b4f0e4"></div>
<div style="left:1279px;top:78px;width:38px;height:38px;background:#9cdcdc;box-sizing:border-box;border:3px solid;border-color:#d4f8f8 #5c9898 #5c9898 #d4f8f8"></div>
<svg style="left:1283px;top:82px" width="30" height="30" viewBox="0 0 30 30"><rect x="8" y="9" width="15" height="14" fill="none" stroke="#000" stroke-width="1.8"/><path d="M15.4 1.8L21 7H19.3V12.5H11.7V7H10z" fill="#000"/><rect x="0.5" y="0.5" width="29" height="29" fill="none" stroke="#000" stroke-width="1"/></svg>
<div style="left:1319px;top:78px;width:38px;height:38px;background:#9cdcdc;box-sizing:border-box;border:3px solid;border-color:#d4f8f8 #5c9898 #5c9898 #d4f8f8"></div>
<svg style="left:1323px;top:82px" width="30" height="30" viewBox="0 0 30 30"><rect x="8" y="6.8" width="14.5" height="13.5" fill="none" stroke="#000" stroke-width="1.8"/><path d="M15.2 27.8L9.6 23H12V17H18.8V23H20.9z" fill="#000"/><rect x="0.5" y="0.5" width="29" height="29" fill="none" stroke="#000" stroke-width="1"/></svg>
<div style="left:1359px;top:78px;width:38px;height:38px;background:#9cdcdc;box-sizing:border-box;border:3px solid;border-color:#d4f8f8 #5c9898 #5c9898 #d4f8f8"></div>
<svg style="left:1363px;top:82px" width="30" height="30" viewBox="0 0 30 30"><path d="M3.4 14.2L13.9 4.3L24.3 14.2M6.6 14V26H21.6V14M13.5 26V17.5H17.8V26M18.6 9V5H20.7V11M20.7 4L22 2.6" fill="none" stroke="#000" stroke-width="1.3"/><rect x="8.8" y="17.4" width="2.4" height="2.4" fill="none" stroke="#000" stroke-width="1"/><rect x="0.5" y="0.5" width="29" height="29" fill="none" stroke="#000" stroke-width="1"/></svg>
<div style="left:1399px;top:78px;width:38px;height:38px;background:#9cdcdc;box-sizing:border-box;border:3px solid;border-color:#d4f8f8 #5c9898 #5c9898 #d4f8f8"></div>
<svg style="left:1403px;top:82px" width="30" height="30" viewBox="0 0 30 30"><rect x="3.6" y="4" width="21.8" height="21.4" fill="none" stroke="#000" stroke-width="1.8"/><path d="M14.8 4V25.4M3.6 19.7H25.4" stroke="#000" stroke-width="1.1" fill="none"/><text x="16.2" y="17.6" font-family="Liberation Sans, sans-serif" font-size="5.5" font-weight="bold" fill="#000">xy</text><rect x="0.5" y="0.5" width="29" height="29" fill="none" stroke="#000" stroke-width="1"/></svg>
<div style="left:1279px;top:118px;width:38px;height:38px;background:#9cdcdc;box-sizing:border-box;border:3px solid;border-color:#d4f8f8 #5c9898 #5c9898 #d4f8f8"></div>
<svg style="left:1283px;top:122px" width="30" height="30" viewBox="0 0 30 30"><path d="M11 7.2H23.4V20.8H9.2V19" fill="none" stroke="#000" stroke-width="1.8"/><path d="M2.3 14L8 8.5V10.5H13V17.5H8V19.5z" fill="#000"/><rect x="0.5" y="0.5" width="29" height="29" fill="none" stroke="#000" stroke-width="1"/></svg>
<div style="left:1319px;top:118px;width:38px;height:38px;background:#9cdcdc;box-sizing:border-box;border:3px solid;border-color:#d4f8f8 #5c9898 #5c9898 #d4f8f8"></div>
<svg style="left:1323px;top:122px" width="30" height="30" viewBox="0 0 30 30"><path d="M20 9V7.2H6V20.8H20V19" fill="none" stroke="#000" stroke-width="1.8"/><path d="M27.3 14L21.5 8.5V10.5H17V17.5H21.5V19.5z" fill="#000"/><rect x="0.5" y="0.5" width="29" height="29" fill="none" stroke="#000" stroke-width="1"/></svg>
<div style="left:1359px;top:118px;width:38px;height:38px;background:#9cdcdc;box-sizing:border-box;border:3px solid;border-color:#d4f8f8 #5c9898 #5c9898 #d4f8f8"></div>
<svg style="left:1363px;top:122px" width="30" height="30" viewBox="0 0 30 30"><rect x="14.2" y="8.8" width="11" height="12" fill="none" stroke="#000" stroke-width="1.8"/><path d="M4 20.4H7Q9.6 20.4 9.6 17.4V14Q9.6 11 6.6 11H5" fill="none" stroke="#000" stroke-width="2.4"/><path d="M1.8 11L6 7.4V14.6z" fill="#000"/><rect x="0.5" y="0.5" width="29" height="29" fill="none" stroke="#000" stroke-width="1"/></svg>
<div style="left:1399px;top:118px;width:38px;height:38px;background:#9cdcdc;box-sizing:border-box;border:3px solid;border-color:#d4f8f8 #5c9898 #5c9898 #d4f8f8"></div>
<svg style="left:1403px;top:122px" width="30" height="30" viewBox="0 0 30 30"><path d="M25 7.4H6.8V14H23.9V21H4.5" fill="none" stroke="#000" stroke-width="1.8"/><path d="M28 4.5L25 7.4L28 10.3M2.5 18L5.5 21L2.5 24" fill="none" stroke="#000" stroke-width="0.9"/><rect x="0.5" y="0.5" width="29" height="29" fill="none" stroke="#000" stroke-width="1"/></svg>
<div style="left:1279px;top:158px;width:38px;height:38px;background:#9cdcdc;box-sizing:border-box;border:3px solid;border-color:#d4f8f8 #5c9898 #5c9898 #d4f8f8"></div>
<svg style="left:1283px;top:162px" width="30" height="30" viewBox="0 0 30 30"><rect x="8.4" y="8" width="13.4" height="13.4" fill="none" stroke="#000" stroke-width="2"/><path d="M9 1.5H20.4L14.7 4.6zM9 28.5H20.4L14.7 25.2zM0.8 9V19.8L5.6 14.4zM29.2 9V19.8L24.4 14.4z" fill="#000"/><rect x="0.5" y="0.5" width="29" height="29" fill="none" stroke="#000" stroke-width="1"/></svg>
<div style="left:1319px;top:158px;width:38px;height:38px;background:#9cdcdc;box-sizing:border-box;border:3px solid;border-color:#d4f8f8 #5c9898 #5c9898 #d4f8f8"></div>
<svg style="left:1323px;top:162px" width="30" height="30" viewBox="0 0 30 30"><rect x="9.6" y="11" width="8.8" height="8" fill="none" stroke="#000" stroke-width="1.2"/><rect x="11.8" y="13" width="4.4" height="4" fill="none" stroke="#000" stroke-width="1.2"/><path d="M14 3.6L19.2 7.7H8.8zM14 26.6L19.2 22.3H8.8zM2.8 15L6.8 10V20zM26.6 15L22.2 10V20z" fill="#000"/><rect x="0.5" y="0.5" width="29" height="29" fill="none" stroke="#000" stroke-width="1"/></svg>
<div style="left:1359px;top:158px;width:38px;height:38px;background:#9cdcdc;box-sizing:border-box;border:3px solid;border-color:#d4f8f8 #5c9898 #5c9898 #d4f8f8"></div>
<svg style="left:1363px;top:162px" width="30" height="30" viewBox="0 0 30 30"><text x="5.2" y="20.4" font-family="Liberation Sans, sans-serif" font-size="16" font-weight="bold" fill="#000" stroke="#000" stroke-width="0.4" textLength="18.6" lengthAdjust="spacingAndGlyphs">1:2</text><rect x="0.5" y="0.5" width="29" height="29" fill="none" stroke="#000" stroke-width="1"/></svg>
<div style="left:1399px;top:158px;width:38px;height:38px;background:#9cdcdc;box-sizing:border-box;border:3px solid;border-color:#d4f8f8 #5c9898 #5c9898 #d4f8f8"></div>
<svg style="left:1403px;top:162px" width="30" height="30" viewBox="0 0 30 30"><rect x="3.8" y="4.2" width="21.4" height="20.8" fill="none" stroke="#000" stroke-width="2"/><text x="12" y="21.5" font-family="Liberation Sans, sans-serif" font-size="15" font-weight="bold" fill="#000">?</text><rect x="0.5" y="0.5" width="29" height="29" fill="none" stroke="#000" stroke-width="1"/></svg>
<div style="left:1279px;top:198px;width:38px;height:38px;background:#9cdcdc;box-sizing:border-box;border:3px solid;border-color:#d4f8f8 #5c9898 #5c9898 #d4f8f8"></div>
<svg style="left:1283px;top:202px" width="30" height="30" viewBox="0 0 30 30"><path d="M3.2 5.2H21" stroke="#000" stroke-width="2.4" fill="none"/><path d="M26.8 3L23 3Q20 5.2 23 7.6H26.8" fill="none" stroke="#000" stroke-width="2"/><path d="M3.6 12.2L8.2 10.2H26.4V14.2H8.2z" fill="none" stroke="#000" stroke-width="1"/><path d="M10.2 21.5Q10.5 17 16 16.2Q22.4 15.6 23 19Q23.4 23 19 25.4Q13.5 27.6 11 25Q10 23.6 10.2 21.5z" fill="none" stroke="#000" stroke-width="1"/><circle cx="13" cy="22.6" r="0.9" fill="none" stroke="#000" stroke-width="0.7"/><circle cx="15" cy="19.6" r="0.9" fill="none" stroke="#000" stroke-width="0.7"/><circle cx="18.6" cy="18.6" r="0.9" fill="none" stroke="#000" stroke-width="0.7"/><rect x="0.5" y="0.5" width="29" height="29" fill="none" stroke="#000" stroke-width="1"/></svg>
<div style="left:1319px;top:198px;width:38px;height:38px;background:#9cdcdc;box-sizing:border-box;border:3px solid;border-color:#d4f8f8 #5c9898 #5c9898 #d4f8f8"></div>
<svg style="left:1323px;top:202px" width="30" height="30" viewBox="0 0 30 30"><path d="M9.5 1V29M19.5 1V29M1 10.5H29M1 20.5H29" stroke="#c4aaaa" stroke-width="0.7" fill="none"/><rect x="0.5" y="0.5" width="29" height="29" fill="none" stroke="#000" stroke-width="1"/></svg>
<div style="left:1359px;top:198px;width:38px;height:38px;background:#9cdcdc;box-sizing:border-box;border:3px solid;border-color:#d4f8f8 #5c9898 #5c9898 #d4f8f8"></div>
<div style="left:1361px;top:200px;width:34px;height:34px;box-sizing:border-box;border:3px solid #e01010;background:#c8ecec"></div>
<svg style="left:1363px;top:202px" width="30" height="30" viewBox="0 0 30 30"><path d="M3.5 1V13M3.5 13.5H13.5V29" stroke="#ff0000" stroke-width="1" fill="none"/><circle cx="3.8" cy="13" r="2.4" fill="#ff0000"/><path d="M12.2 4V23H6.2" stroke="#0000ff" stroke-width="1.2" fill="none"/><circle cx="12.2" cy="4" r="2.3" fill="#0000ff"/><circle cx="6.2" cy="23" r="2.4" fill="#0000ff"/><rect x="15.5" y="1.5" width="11.5" height="25.5" fill="none" stroke="#000" stroke-width="1"/><circle cx="21.5" cy="7.4" r="3.6" fill="#ff0000"/><circle cx="21.5" cy="15.7" r="2.6" fill="#fff" stroke="#000" stroke-width="1"/><circle cx="21.5" cy="22.8" r="2.6" fill="#fff" stroke="#000" stroke-width="1"/><rect x="0.5" y="0.5" width="29" height="29" fill="none" stroke="#000" stroke-width="1"/></svg>
<div style="left:1399px;top:198px;width:38px;height:38px;background:#9cdcdc;box-sizing:border-box;border:3px solid;border-color:#d4f8f8 #5c9898 #5c9898 #d4f8f8"></div>
<div style="left:1401px;top:200px;width:34px;height:34px;box-sizing:border-box;border:3px solid #e01010;background:#c8ecec"></div>
<svg style="left:1403px;top:202px" width="30" height="30" viewBox="0 0 30 30"><path d="M4.5 1V13" stroke="#000" stroke-width="1" fill="none"/><circle cx="4.5" cy="13" r="2.4" fill="#000"/><path d="M12 4V23H6" stroke="#000" stroke-width="1.2" fill="none"/><circle cx="12" cy="4" r="2.3" fill="#000"/><circle cx="6" cy="23" r="2.4" fill="#000"/><path d="M7 11.6H11.4" stroke="#ff0000" stroke-width="2.4" stroke-dasharray="0.9 0.6" fill="none"/><rect x="15.5" y="1.5" width="11.5" height="25.5" fill="none" stroke="#000" stroke-width="1"/><circle cx="21.5" cy="7.4" r="3.6" fill="#ff0000"/><circle cx="21.5" cy="15.7" r="2.6" fill="#fff" stroke="#000" stroke-width="1"/><circle cx="21.5" cy="22.8" r="2.6" fill="#fff" stroke="#000" stroke-width="1"/><rect x="0.5" y="0.5" width="29" height="29" fill="none" stroke="#000" stroke-width="1"/></svg>
<div style="left:1279px;top:242px;width:38px;height:38px;background:#ffffff;box-sizing:border-box;border:3px solid;border-color:#e0e0e0 #a4a4a4 #a4a4a4 #e0e0e0"></div>
<svg style="left:1283px;top:246px" width="30" height="30" viewBox="0 0 30 30"><rect x="7.6" y="8.8" width="15" height="14.6" fill="none" stroke="#000" stroke-width="1"/><circle cx="14.8" cy="15.8" r="6" fill="#000"/><path d="M20 10.4L26 4.4" stroke="#000" stroke-width="2" fill="none"/><path d="M28.2 2.2V8L22.4 2.2z" fill="#000"/><rect x="0.5" y="0.5" width="29" height="29" fill="none" stroke="#000" stroke-width="1"/></svg>
<div style="left:1319px;top:242px;width:38px;height:38px;background:#ffffff;box-sizing:border-box;border:3px solid;border-color:#ffffff #ffffff #ffffff #ffffff"></div>
<svg style="left:1323px;top:246px" width="30" height="30" viewBox="0 0 30 30"><rect x="1" y="1" width="28" height="28" fill="#000"/><rect x="13.8" y="3.8" width="12" height="12" fill="none" stroke="#e01818" stroke-width="2"/><rect x="3.6" y="19.4" width="6.4" height="6.4" fill="none" stroke="#1010d0" stroke-width="1.8"/><path d="M3.6 18.4L13 3.4M10.8 26L26.4 16.6" stroke="#fff" stroke-width="0.9" fill="none"/><rect x="0.5" y="0.5" width="29" height="29" fill="none" stroke="#000" stroke-width="1"/></svg>
<div style="left:1359px;top:242px;width:38px;height:38px;background:#ffffff;box-sizing:border-box;border:3px solid;border-color:#e0e0e0 #a4a4a4 #a4a4a4 #e0e0e0"></div>
<svg style="left:1363px;top:246px" width="30" height="30" viewBox="0 0 30 30"><rect x="2.5" y="14.6" width="24.8" height="4" fill="#000"/><path d="M3 11V15M5.5 12.5V15M8 11V15M10.5 12.5V15M13 11V15M15.5 12.5V15M18 11V15M20.5 12.5V15M23 11V15M25.2 12.5V15M26.8 11V15" stroke="#000" stroke-width="1.1" fill="none"/><rect x="0.5" y="0.5" width="29" height="29" fill="none" stroke="#000" stroke-width="1"/></svg>
<div style="left:1399px;top:242px;width:38px;height:38px;background:#ffffff;box-sizing:border-box;border:3px solid;border-color:#e0e0e0 #a4a4a4 #a4a4a4 #e0e0e0"></div>
<svg style="left:1403px;top:246px" width="30" height="30" viewBox="0 0 30 30"><rect x="3.8" y="4.2" width="21.4" height="21.6" fill="none" stroke="#000" stroke-width="1" stroke-dasharray="2 1.3"/><path d="M11.2 8.8H17.4L21.4 12.8V18.8L17.4 22.6H11.2L7.2 18.8V12.8z" fill="#000"/><rect x="0.5" y="0.5" width="29" height="29" fill="none" stroke="#000" stroke-width="1"/></svg>
<div style="left:1279px;top:282px;width:38px;height:38px;background:#d4d4d4;box-sizing:border-box;border:3px solid;border-color:#f4f4f4 #8c8c8c #8c8c8c #f4f4f4"></div>
<svg style="left:1283px;top:286px" width="30" height="30" viewBox="0 0 30 30"><path d="M7.5 6.8V22.2H22.5" stroke="#0000ff" stroke-width="3.2" fill="none"/><circle cx="7.5" cy="6.8" r="4.4" fill="#0000ff"/><circle cx="7.5" cy="22.2" r="4.4" fill="#0000ff"/><circle cx="22.5" cy="22.2" r="4.4" fill="#0000ff"/><circle cx="22.5" cy="6.8" r="4.4" fill="#ff0000"/><rect x="0.5" y="0.5" width="29" height="29" fill="none" stroke="#000" stroke-width="1"/></svg>
<div style="left:1319px;top:282px;width:38px;height:38px;background:#d4d4d4;box-sizing:border-box;border:3px solid;border-color:#f4f4f4 #8c8c8c #8c8c8c #f4f4f4"></div>
<svg style="left:1323px;top:286px" width="30" height="30" viewBox="0 0 30 30"><path d="M12.8 10.4H16.8L19.2 12.8V16.8L16.8 19.2H12.8L10.4 16.8V12.8z" fill="#0000d0"/><path d="M7 7.6L22.6 22M22.6 7.6L7 22" stroke="#000" stroke-width="1.7" fill="none"/><rect x="0.5" y="0.5" width="29" height="29" fill="none" stroke="#000" stroke-width="1"/></svg>
<div style="left:1359px;top:282px;width:38px;height:38px;background:#d4d4d4;box-sizing:border-box;border:3px solid;border-color:#f4f4f4 #8c8c8c #8c8c8c #f4f4f4"></div>
<svg style="left:1363px;top:286px" width="30" height="30" viewBox="0 0 30 30"><circle cx="21.9" cy="6.8" r="4.4" fill="#ff0000"/><circle cx="6.8" cy="22" r="3.4" fill="none" stroke="#0000ff" stroke-width="2"/><path d="M11.4 18L17 12.4M14 12.4H17V15.4" stroke="#000" stroke-width="0.9" fill="none"/><rect x="0.5" y="0.5" width="29" height="29" fill="none" stroke="#000" stroke-width="1"/></svg>
<div style="left:1399px;top:282px;width:38px;height:38px;background:#d4d4d4;box-sizing:border-box;border:3px solid;border-color:#f4f4f4 #8c8c8c #8c8c8c #f4f4f4"></div>
<svg style="left:1403px;top:286px" width="30" height="30" viewBox="0 0 30 30"><circle cx="21.9" cy="6.8" r="4.4" fill="#ff0000"/><circle cx="6.8" cy="22" r="4.4" fill="#0000ff"/><path d="M11.4 18L17 12.4M14 12.4H17V15.4" stroke="#000" stroke-width="0.9" fill="none"/><rect x="0.5" y="0.5" width="29" height="29" fill="none" stroke="#000" stroke-width="1"/></svg>
<div style="left:1279px;top:322px;width:38px;height:38px;background:#d4d4d4;box-sizing:border-box;border:3px solid;border-color:#f4f4f4 #8c8c8c #8c8c8c #f4f4f4"></div>
<svg style="left:1283px;top:326px" width="30" height="30" viewBox="0 0 30 30"><path d="M5.8 22L23 5.8" stroke="#ff0000" stroke-width="2.3" stroke-linecap="round" fill="none"/><path d="M7 24.6H25.4" stroke="#0000ff" stroke-width="2.5" stroke-linecap="round" fill="none"/><path d="M22.4 19.6L19.2 16.6M19.2 19V16.6H21.6" stroke="#000" stroke-width="0.9" fill="none"/><rect x="0.5" y="0.5" width="29" height="29" fill="none" stroke="#000" stroke-width="1"/></svg>
<div style="left:1319px;top:322px;width:38px;height:38px;background:#d4d4d4;box-sizing:border-box;border:3px solid;border-color:#f4f4f4 #8c8c8c #8c8c8c #f4f4f4"></div>
<svg style="left:1323px;top:326px" width="30" height="30" viewBox="0 0 30 30"><path d="M14.3 13.8L23 5.8" stroke="#ff0000" stroke-width="2.3" stroke-linecap="round" fill="none"/><path d="M5.8 22L14.3 13.8" stroke="#0000ff" stroke-width="2.3" stroke-linecap="round" fill="none"/><path d="M16.4 20.4L19.6 17.2M17.2 17.2H19.6V19.6" stroke="#000" stroke-width="0.9" fill="none"/><rect x="0.5" y="0.5" width="29" height="29" fill="none" stroke="#000" stroke-width="1"/></svg>
<div style="left:1359px;top:322px;width:38px;height:38px;background:#d4d4d4;box-sizing:border-box;border:3px solid;border-color:#f4f4f4 #8c8c8c #8c8c8c #f4f4f4"></div>
<svg style="left:1363px;top:326px" width="30" height="30" viewBox="0 0 30 30"><path d="M12.8 7.6Q20.4 9 20 14.6Q19.4 20 12.6 21.4" stroke="#000" stroke-width="1.8" fill="none"/><path d="M9.6 21.6L14 18.4L14.4 23.8z" fill="#000"/><rect x="0.5" y="0.5" width="29" height="29" fill="none" stroke="#000" stroke-width="1"/></svg>
<div style="left:1399px;top:322px;width:38px;height:38px;background:#d4d4d4;box-sizing:border-box;border:3px solid;border-color:#f4f4f4 #8c8c8c #8c8c8c #f4f4f4"></div>
<svg style="left:1403px;top:326px" width="30" height="30" viewBox="0 0 30 30"><path d="M14.5 2.6V26.6" stroke="#000" stroke-width="1" fill="none"/><path d="M18.4 23.2V6.6H27.4M18.4 15.2H26" stroke="#ff0000" stroke-width="2.2" fill="none"/><path d="M11.2 23.2V6.6H2.8M11.2 15.2H3.6" stroke="#0000ff" stroke-width="2.2" fill="none"/><rect x="0.5" y="0.5" width="29" height="29" fill="none" stroke="#000" stroke-width="1"/></svg>
<div style="left:1279px;top:362px;width:38px;height:38px;background:#d4d4d4;box-sizing:border-box;border:3px solid;border-color:#f4f4f4 #8c8c8c #8c8c8c #f4f4f4"></div>
<svg style="left:1283px;top:366px" width="30" height="30" viewBox="0 0 30 30"><rect x="16.9" y="1.7" width="10.9" height="10.4" fill="#ff0000"/><circle cx="22.3" cy="6.8" r="3.3" fill="#d4d4d4"/><rect x="2.4" y="17.3" width="10" height="9.8" fill="none" stroke="#0000ff" stroke-width="1"/><circle cx="7.4" cy="22.2" r="3.4" fill="#0000ff"/><path d="M13.6 15.8L16.6 12.8M14.4 12.6H16.8V15" stroke="#000" stroke-width="1.1" fill="none"/><rect x="0.5" y="0.5" width="29" height="29" fill="none" stroke="#000" stroke-width="1"/></svg>
<div style="left:1319px;top:362px;width:38px;height:38px;background:#d4d4d4;box-sizing:border-box;border:3px solid;border-color:#f4f4f4 #8c8c8c #8c8c8c #f4f4f4"></div>
<svg style="left:1323px;top:366px" width="30" height="30" viewBox="0 0 30 30"><path d="M4.6 14H25" stroke="#ff0000" stroke-width="2.5" stroke-linecap="round" fill="none"/><path d="M12.6 14H17" stroke="#0000ff" stroke-width="2.5" fill="none"/><rect x="0.5" y="0.5" width="29" height="29" fill="none" stroke="#000" stroke-width="1"/></svg>
<div style="left:1359px;top:362px;width:38px;height:38px;background:#d4d4d4;box-sizing:border-box;border:3px solid;border-color:#f4f4f4 #8c8c8c #8c8c8c #f4f4f4"></div>
<svg style="left:1363px;top:366px" width="30" height="30" viewBox="0 0 30 30"><path d="M3.5 3.8V26.2M25.5 3.8V26.2" stroke="#000" stroke-width="1" fill="none"/><rect x="10.8" y="10" width="7.2" height="9" fill="none" stroke="#0000ff" stroke-width="1"/><path d="M5 15.1H10.8M18 15.1H24M7 13L5 15.1L7 17.2M22 13L24 15.1L22 17.2" stroke="#0000ff" stroke-width="0.9" fill="none"/><text x="12.2" y="17.8" font-family="Liberation Sans, sans-serif" font-size="8" font-weight="bold" fill="#0000ff">4</text><rect x="0.5" y="0.5" width="29" height="29" fill="none" stroke="#000" stroke-width="1"/></svg>
<div style="left:1399px;top:362px;width:38px;height:38px;background:#d4d4d4;box-sizing:border-box;border:3px solid;border-color:#f4f4f4 #8c8c8c #8c8c8c #f4f4f4"></div>
<svg style="left:1403px;top:366px" width="30" height="30" viewBox="0 0 30 30"><path d="M3.6 6H18.2V13H25V25H12L9 22H5.7V16H3.6z" fill="#0000ff"/><circle cx="8.9" cy="11" r="3.2" fill="#d4d4d4"/><circle cx="18" cy="19.4" r="4.3" fill="#d4d4d4"/><rect x="0.5" y="0.5" width="29" height="29" fill="none" stroke="#000" stroke-width="1"/></svg>
<div style="left:1279px;top:402px;width:38px;height:38px;background:#d4d4d4;box-sizing:border-box;border:3px solid;border-color:#f4f4f4 #8c8c8c #8c8c8c #f4f4f4"></div>
<svg style="left:1283px;top:406px" width="30" height="30" viewBox="0 0 30 30"><path d="M4.6 22.2L17.8 8.4L25.2 22.2" stroke="#ff0000" stroke-width="1.7" fill="none"/><path d="M5 22.6H25" stroke="#0000ff" stroke-width="2.6" fill="none"/><path d="M16.5 19.2V15M14.3 17.4L16.5 15L18.7 17.4" fill="none" stroke="#000" stroke-width="1"/><rect x="0.5" y="0.5" width="29" height="29" fill="none" stroke="#000" stroke-width="1"/></svg>
<div style="left:1319px;top:402px;width:38px;height:38px;background:#d4d4d4;box-sizing:border-box;border:3px solid;border-color:#f4f4f4 #8c8c8c #8c8c8c #f4f4f4"></div>
<svg style="left:1323px;top:406px" width="30" height="30" viewBox="0 0 30 30"><path d="M2.4 28.8L13.4 2.8L26 28.8" stroke="#ff0000" stroke-width="2" fill="none"/><path d="M5.8 28.8L13.4 18.8L23.8 28.8" stroke="#0000ff" stroke-width="2.4" fill="none"/><path d="M14.5 16.5V11M12.3 13.4L14.5 11L16.7 13.4" fill="none" stroke="#000" stroke-width="1"/><rect x="0.5" y="0.5" width="29" height="29" fill="none" stroke="#000" stroke-width="1"/></svg>
<div style="left:1359px;top:402px;width:38px;height:38px;background:#d4d4d4;box-sizing:border-box;border:3px solid;border-color:#f4f4f4 #8c8c8c #8c8c8c #f4f4f4"></div>
<svg style="left:1363px;top:406px" width="30" height="30" viewBox="0 0 30 30"><path d="M4.4 18.8L9.4 6H19L24.6 18.8" stroke="#ff0000" stroke-width="2.3" fill="none"/><path d="M1.6 28.6L4 19.8H25.4L28 28.6" stroke="#0000ff" stroke-width="2.5" fill="none"/><path d="M14.5 16.2V11M12.3 13.4L14.5 11L16.7 13.4" fill="none" stroke="#000" stroke-width="1"/><rect x="0.5" y="0.5" width="29" height="29" fill="none" stroke="#000" stroke-width="1"/></svg>
<div style="left:1399px;top:402px;width:38px;height:38px;background:#d4d4d4;box-sizing:border-box;border:3px solid;border-color:#f4f4f4 #8c8c8c #8c8c8c #f4f4f4"></div>
<svg style="left:1403px;top:406px" width="30" height="30" viewBox="0 0 30 30"><path d="M4.2 19.6L9.4 6H19L24.8 19.6" stroke="#ff0000" stroke-width="2.3" fill="none"/><path d="M0.6 19.8H29.4" stroke="#0000ff" stroke-width="2.5" fill="none"/><path d="M2 17L7.4 23M7.4 17L2 23M22 17L27.6 23M27.6 17L22 23" stroke="#000" stroke-width="0.9" fill="none"/><path d="M14.5 16.2V11M12.3 13.4L14.5 11L16.7 13.4" fill="none" stroke="#000" stroke-width="1"/><rect x="0.5" y="0.5" width="29" height="29" fill="none" stroke="#000" stroke-width="1"/></svg>
<div style="left:1279px;top:442px;width:38px;height:38px;background:#ffc850;box-sizing:border-box;border:3px solid;border-color:#ffe8a0 #b48c34 #b48c34 #ffe8a0"></div>
<svg style="left:1283px;top:446px" width="30" height="30" viewBox="0 0 30 30"><path d="M11.2 6.0L11.4 17.2L14.2 15.0L17.4 22.8L19.9 21.6L16.8 13.9L20.3 13.4z" fill="#000"/><rect x="0.5" y="0.5" width="29" height="29" fill="none" stroke="#000" stroke-width="1"/></svg>
<div style="left:1319px;top:442px;width:38px;height:38px;background:#ffc850;box-sizing:border-box;border:3px solid;border-color:#ffe8a0 #b48c34 #b48c34 #ffe8a0"></div>
<svg style="left:1323px;top:446px" width="30" height="30" viewBox="0 0 30 30"><rect x="4.6" y="3.8" width="20" height="20.4" fill="none" stroke="#e01800" stroke-width="1.7"/><path d="M11.6 6.0L11.8 17.2L14.6 15.0L17.8 22.8L20.3 21.6L17.2 13.9L20.7 13.4z" fill="#000"/><rect x="0.5" y="0.5" width="29" height="29" fill="none" stroke="#000" stroke-width="1"/></svg>
<div style="left:1359px;top:442px;width:38px;height:38px;background:#ffc850;box-sizing:border-box;border:3px solid;border-color:#ffe8a0 #b48c34 #b48c34 #ffe8a0"></div>
<svg style="left:1363px;top:446px" width="30" height="30" viewBox="0 0 30 30"><path d="M9.6 3.8H24.6V24.4H10L4.6 19V8.4z" fill="none" stroke="#e01800" stroke-width="1.7"/><path d="M11.6 6.0L11.8 17.2L14.6 15.0L17.8 22.8L20.3 21.6L17.2 13.9L20.7 13.4z" fill="#000"/><rect x="0.5" y="0.5" width="29" height="29" fill="none" stroke="#000" stroke-width="1"/></svg>
<div style="left:1399px;top:442px;width:38px;height:38px;background:#ffc850;box-sizing:border-box;border:3px solid;border-color:#ffe8a0 #b48c34 #b48c34 #ffe8a0"></div>
<svg style="left:1403px;top:446px" width="30" height="30" viewBox="0 0 30 30"><path d="M5.5 0.6V14.4M4.8 23.5H12.5V15.5H15.5V7.5H23" stroke="#000" stroke-width="0.9" fill="none"/><circle cx="5.9" cy="16.3" r="2" fill="#e02000" stroke="#600" stroke-width="0.5"/><circle cx="4.8" cy="23.9" r="2.1" fill="#20e020" stroke="#060" stroke-width="0.5"/><circle cx="23" cy="7.2" r="2.1" fill="#20e020" stroke="#060" stroke-width="0.5"/><path d="M18.8 12.5L19.0 22.0L21.3 20.1L24.1 26.8L26.2 25.8L23.6 19.2L26.5 18.8z" fill="#000"/><rect x="0.5" y="0.5" width="29" height="29" fill="none" stroke="#000" stroke-width="1"/></svg>
<div style="left:1276px;top:480px;width:164px;height:1px;background:#000"></div>
<div style="left:1276px;top:481px;width:164px;height:2px;background:#809c94"></div>
<div style="left:1276px;top:483px;width:164px;height:2px;background:#2c6c5c"></div>
<div style="left:1276px;top:485px;width:164px;height:239px;background:#000"></div>
<div style="left:1276px;top:483px;width:2px;height:241px;background:#3a8870"></div>
<div style="left:1438px;top:484px;width:2px;height:240px;background:#b4f0e4"></div>
<svg style="left:1277px;top:485px" width="163" height="239" viewBox="1277 485 163 239"><path d="M1278 561.5H1438M1278 649.5H1438" stroke="#4a8c1c" stroke-width="1" fill="none"/><rect x="1320" y="571" width="87" height="54" fill="#ff0000"/><rect x="1327.5" y="576.5" width="62" height="37" fill="#00ffff"/><path d="M1328.5 576.5V613.5M1388.5 576.5V613.5M1327.5 594.5H1389.5" stroke="#909090" stroke-width="1.6" fill="none"/><rect x="1332.9" y="578.6" width="3.4" height="12.4" rx="1.4" fill="#e01010"/><path d="M1332.9 598.6h3.4v8l-1.7 3.4l-1.7 -3.4z" fill="#e01010"/><rect x="1339.4" y="578.6" width="3.4" height="12.4" rx="1.4" fill="#e01010"/><path d="M1339.4 598.6h3.4v8l-1.7 3.4l-1.7 -3.4z" fill="#e01010"/><rect x="1346.2" y="578.6" width="3.4" height="12.4" rx="1.4" fill="#e01010"/><path d="M1346.2 598.6h3.4v8l-1.7 3.4l-1.7 -3.4z" fill="#e01010"/><rect x="1352.9" y="578.6" width="3.4" height="12.4" rx="1.4" fill="#e01010"/><path d="M1352.9 598.6h3.4v8l-1.7 3.4l-1.7 -3.4z" fill="#e01010"/><rect x="1359.3" y="578.6" width="3.4" height="12.4" rx="1.4" fill="#e01010"/><path d="M1359.3 598.6h3.4v8l-1.7 3.4l-1.7 -3.4z" fill="#e01010"/><rect x="1366.2" y="578.6" width="3.4" height="12.4" rx="1.4" fill="#e01010"/><path d="M1366.2 598.6h3.4v8l-1.7 3.4l-1.7 -3.4z" fill="#e01010"/><rect x="1372.6" y="578.6" width="3.4" height="12.4" rx="1.4" fill="#e01010"/><path d="M1372.6 598.6h3.4v8l-1.7 3.4l-1.7 -3.4z" fill="#e01010"/><rect x="1379.3" y="578.6" width="3.4" height="12.4" rx="1.4" fill="#e01010"/><path d="M1379.3 598.6h3.4v8l-1.7 3.4l-1.7 -3.4z" fill="#e01010"/><path d="M1325 611l3 5l3 -5l3.3 5l3.3 -5l3.3 5l3.3 -5l3.3 5l3.3 -5l3.3 5l3.3 -5l3.3 5l3.3 -5l3.3 5l3.3 -5l3.3 5l3.3 -5l3.3 5" stroke="#70f0f0" stroke-width="0.8" fill="none"/></svg>
<div style="left:1276px;top:724px;width:164px;height:44px;background:#52ccb0"></div>
<div style="left:1276px;top:768px;width:164px;height:2px;background:#b4f0e4"></div>
<div style="left:1438px;top:724px;width:2px;height:46px;background:#b4f0e4"></div>
<div style="left:1276px;top:724px;width:164px;height:2px;background:#b4f0e4"></div>
<div style="left:1276px;top:726px;width:164px;height:2px;background:#2f7c6c"></div>
<div style="left:1276px;top:726px;width:2px;height:42px;background:#2f7c6c"></div>
<span style="left:1281px;top:734px;font:bold 14.3px/15px 'Liberation Mono', monospace;letter-spacing:0.42px;color:#000">X = 9.327550mm</span>
<span style="left:1281px;top:749px;font:bold 14.3px/15px 'Liberation Mono', monospace;letter-spacing:0.42px;color:#000">Y = 43.700198mm</span>
<!-- part_bottom -->
<div style="left:0px;top:770px;width:155px;height:2px;background:#e8f4f4"></div>
<div style="left:0px;top:772px;width:1359px;height:32px;background:#ffffd8"></div>
<div style="left:0px;top:771px;width:155px;height:1px;background:#ffffd8"></div>
<div style="left:0px;top:771px;width:97px;height:33px;background:#d8d8c0"></div>
<div style="left:1px;top:772px;width:31px;height:31px;background:#ffffd8;box-sizing:border-box;border:2px solid;border-color:#fffff4 #a8a890 #a8a890 #fffff4"></div>
<div style="left:4px;top:775px;width:25px;height:25px;box-sizing:border-box;border:1px solid;border-color:#d8d8b8 #fffff4 #fffff4 #d8d8b8"></div>
<svg style="left:6px;top:777px" width="21" height="21" viewBox="0 0 21 21"><rect x="0.5" y="0.5" width="20" height="20" fill="none" stroke="#000"/><path d="M5 5L16 16M5 5h3.5M5 5v3.5M16 16h-3.5M16 16v-3.5" stroke="#000" stroke-width="1" fill="none"/></svg>
<div style="left:33px;top:772px;width:31px;height:31px;background:#ffffd8;box-sizing:border-box;border:2px solid;border-color:#fffff4 #a8a890 #a8a890 #fffff4"></div>
<div style="left:36px;top:775px;width:25px;height:25px;box-sizing:border-box;border:1px solid;border-color:#d8d8b8 #fffff4 #fffff4 #d8d8b8"></div>
<svg style="left:38px;top:777px" width="21" height="21" viewBox="0 0 21 21"><rect x="0.5" y="0.5" width="20" height="20" fill="none" stroke="#000"/><path d="M3 18L16 3M3 18H18M7 3V8H10" stroke="#000" stroke-width="1" fill="none"/><path d="M7.5 14Q10 15 10 18" stroke="#000" stroke-width="0.8" fill="none"/><text x="11" y="17.5" font-family="Liberation Sans, sans-serif" font-size="6" font-weight="bold">ox</text></svg>
<div style="left:66px;top:771px;width:29px;height:33px;background:#5cb4a0"></div>
<div style="left:69px;top:774px;width:23px;height:27px;background:#ffffd8;box-sizing:border-box;border:2px solid;border-color:#b8b89c #f8f8e8 #f8f8e8 #b8b89c"></div>
<svg style="left:70px;top:777px" width="21" height="21" viewBox="0 0 21 21"><path d="M2.5 18.5V7.5L8 2.5H18.5V18.5zM10.5 2.5V18.5M2.5 10.5H18.5" stroke="#000" stroke-width="1.2" fill="none"/></svg>
<span style="left:98px;top:781px;font:bold 11.67px/14px 'Liberation Mono', monospace;color:#000">X Y :</span>
<div style="left:142px;top:772px;width:2px;height:32px;background:#000"></div>
<div style="left:316px;top:772px;width:2px;height:32px;background:#000"></div>
<div style="left:346px;top:772px;width:2px;height:32px;background:#000"></div>
<div style="left:144px;top:772px;width:172px;height:31px;background:#fcfce4"></div>
<div style="left:147px;top:775px;width:166px;height:25px;background:#ffffd8;box-sizing:border-box;border:2px solid;border-color:#a8a880 #c0c098 #c0c098 #a8a880"></div>
<svg style="left:149px;top:777px" width="7" height="16" viewBox="0 0 7 16"><path d="M1 0.5H6M1 15.5H6M3.5 0.5V15.5" stroke="#000" stroke-width="1" fill="none"/></svg>
<div style="left:318px;top:772px;width:28px;height:31px;background:#5cb4a0"></div>
<div style="left:321px;top:775px;width:22px;height:25px;background:#ffffd8;box-sizing:border-box;border:2px solid;border-color:#b8b89c #f8f8e8 #f8f8e8 #b8b89c"></div>
<div style="left:324px;top:779px;width:15px;height:17px;box-sizing:border-box;border:1px solid #000"></div>
<div style="left:330.5px;top:782px;width:2px;height:8px;background:#000"></div>
<div style="left:330.5px;top:791px;width:2px;height:2px;background:#000"></div>
<span style="left:352.5px;top:780px;font:bold 11.67px/14px 'Liberation Mono', monospace;color:#000">&lt;M1&gt; - Select first area corner</span>
<div style="left:1359px;top:770px;width:81px;height:35px;background:#000"></div>
<div style="left:1361px;top:772px;width:77px;height:31px;background:#52ccb0"></div>
<div style="left:1367px;top:774px;width:69px;height:27px;background:#52ccb0;box-sizing:border-box;border:2px solid;border-color:#b4f0e4 #2f7c6c #2f7c6c #b4f0e4"></div>
<span style="left:1373px;top:781px;font:bold 12.6px/14px 'Liberation Mono', monospace;letter-spacing:1.4px;color:#000">MM</span>
<div style="left:1417px;top:784px;width:12px;height:7px;background:#52ccb0;box-sizing:border-box;border:2px solid;border-color:#b4f0e4 #2f7c6c #2f7c6c #b4f0e4"></div>
<div style="left:0px;top:803px;width:1359px;height:1px;background:#000"></div>
<div style="left:0px;top:804px;width:1440px;height:2px;background:#5c8484"></div>
<div style="left:2px;top:805px;width:1436px;height:29px;background:#000"></div>
<div style="left:4px;top:807px;width:1433px;height:26px;background:#b0ffff;box-sizing:border-box;border:2px solid;border-color:#dcffff #58a0a0 #58a0a0 #dcffff"></div>
<span style="left:0px;top:813px;font:bold 11.67px/14px 'Liberation Mono', monospace;color:#000;width:1440px;text-align:center">drl,#13,Pad(.pattern_fill,.drill=non_plated),X=8.3056125,Y=86.6138125,r600,POS</span>
<div style="left:0px;top:834px;width:1440px;height:2px;background:#e8f4f4"></div>
<div style="left:0px;top:836px;width:1440px;height:2px;background:#b4b4ac"></div>
<div style="left:0px;top:838px;width:1440px;height:2px;background:#6c6c6c"></div>
</body></html>
